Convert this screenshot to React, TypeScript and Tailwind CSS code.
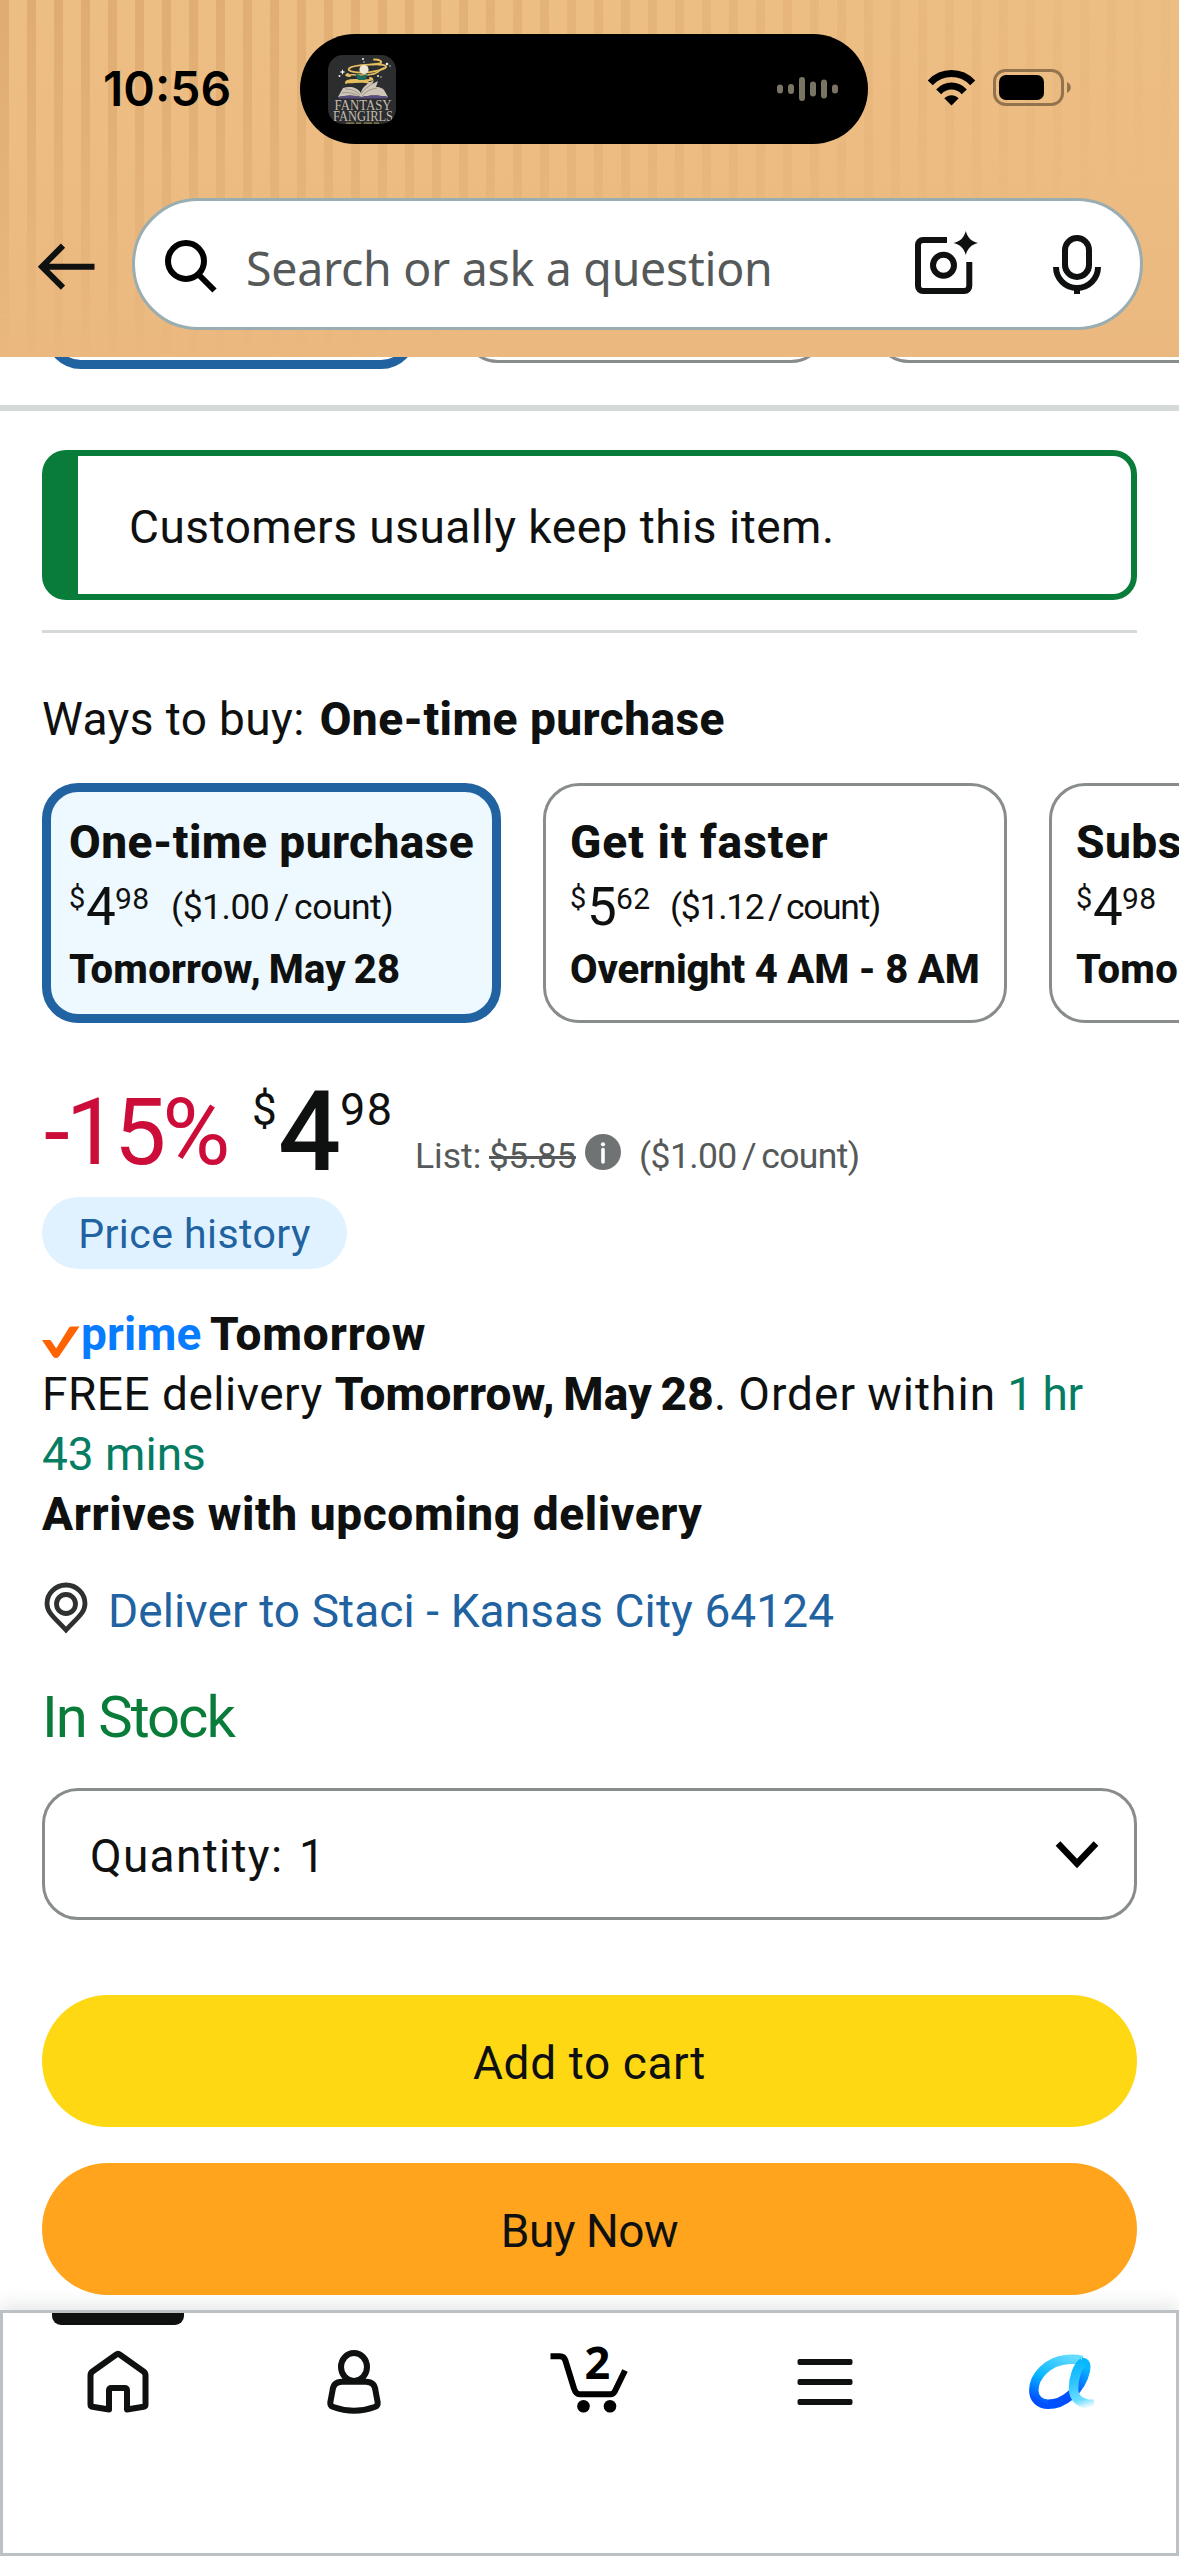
import type { ReactNode } from "react";

function AlbumArt() {
  return (
    <svg width="68" height="69" viewBox="0 0 68 69" className="mt-[21px] ml-7 shrink-0">
      <defs>
        <clipPath id="art">
          <rect width="68" height="69" rx="15" />
        </clipPath>
      </defs>
      <g clipPath="url(#art)">
        <rect width="68" height="69" fill="#2b2d2f" />
        <g fill="none" stroke="#e3bd60" strokeLinecap="round">
          <path d="M46 4.500c6 0 9 2 6 4-5 2-26 0-31 5-2 3 6 4 14 4s24-3 23-6c-1-2-6-2-8-2" strokeWidth="1.900" />
          <path d="M20 20c9-1 20 2 28-2 6-2 2-4 8-5" strokeWidth="1.600" />
          <path d="M22 21c-4 0-5-1-2-2M18 28c0-5 16-2 24-3 4 0 2-2 0-2M18 27c5 1 12-1 20 0 6 1 6 3 2 4" strokeWidth="2" />
        </g>
        <path d="M27 18l6 3 7-2-3 6-7 0z" fill="#1f6b5c" />
        <circle cx="36" cy="14.500" r="4.600" fill="#efe6d3" />
        <g fill="#f4efe4">
          <path d="M14.500 14l.8 2.200 2.200.8-2.200.8-.8 2.200-.8-2.200-2.200-.8 2.200-.8z" />
          <circle cx="11.500" cy="21" r="1" />
          <circle cx="35" cy="4" r="1" />
          <circle cx="36" cy="7" r=".7" />
          <circle cx="59" cy="9" r="1.300" />
          <circle cx="62" cy="11" r=".7" />
          <circle cx="50" cy="21" r="1" />
          <circle cx="53" cy="22" r=".7" />
        </g>
        <path d="M10 42l5-9c7-2 14-1 18 5 1-6 7-10 13-13l-2 4 6-3-2 6c5 0 7 2 8 3l4 7c-9-2-19-2-26 0-8-2-16-2-24 0z" fill="#cfc6b9" />
        <path d="M33 39c3-5 8-8 12-11M34 41c4-5 9-7 15-8M17 34c6 0 12 2 15 6M14 38c6-1 12 0 17 3" stroke="#8e857c" strokeWidth=".8" fill="none" />
        <path d="M10 42c8-2 16-2 24 0 7-2 17-2 26 0l-1 1.500H11z" fill="#5a4d80" />
        <text x="6.500" y="54.500" fontSize="14" textLength="57" lengthAdjust="spacingAndGlyphs" fill="#c3bbaf" fontFamily="Liberation Serif, serif">FANTASY</text>
        <text x="5" y="66" fontSize="14" textLength="60" lengthAdjust="spacingAndGlyphs" fill="#c3bbaf" fontFamily="Liberation Serif, serif">FANGIRLS</text>
        <path d="M18 68.200h34" stroke="#9a8a4d" strokeWidth="1.200" strokeDasharray="8 2 5 3" />
      </g>
    </svg>
  );
}

function StatusBar() {
  return (
    <div className="flex h-[144px] items-start pt-[34px]">
      <div className="w-[300px] pl-[103px] pt-[25px] font-['Inter',sans-serif] text-[48px] font-semibold leading-[60px] text-black">
        10:56
      </div>
      <div className="flex h-[110px] w-[568px] shrink-0 items-start rounded-full bg-black">
        <AlbumArt />
        <svg width="64" height="30" viewBox="0 0 64 30" className="mt-10 ml-[379px] shrink-0" stroke="#7a7462" strokeWidth="6" strokeLinecap="round">
          <path d="M5 13.500v3M16 13v4M27 6v18M38 10.500v9M49 8.500v13M60 13.500v3" />
        </svg>
      </div>
      <svg width="48" height="38" viewBox="0 0 48 38" className="mt-[35px] ml-[60px] shrink-0">
        <g fill="none" stroke="#000" strokeWidth="7">
          <path d="M2.300 13.800C14 1.400 33 1.400 44.700 13.800" />
          <path d="M10.700 22.800C18 15.200 29 15.200 36.300 22.800" />
        </g>
        <path d="M16.300 29.200c4.500-4.100 9.900-4.100 14.400 0L23.500 36.600z" />
      </svg>
      <svg width="80" height="38" viewBox="0 0 80 38" className="mt-[35px] ml-[17px] shrink-0">
        <rect x="1.500" y="1.500" width="68" height="34" rx="11" fill="none" stroke="#93734e" strokeWidth="3" />
        <rect x="6" y="6" width="45" height="25" rx="7" />
        <path d="M74 13c5 2 5 9 0 11z" fill="#93734e" />
      </svg>
    </div>
  );
}

function SearchBar() {
  return (
    <div className="flex items-start pt-[54px]">
      <svg width="60" height="50" viewBox="0 0 60 50" className="mt-11 ml-[36px] shrink-0" fill="none" stroke="#0f1111" strokeWidth="6">
        <path d="M58.500 25H6M27 4L6 25l21 21" transform="translate(0 -.3)" />
      </svg>
      <div className="ml-9 flex h-[132px] w-[1011px] shrink-0 items-start rounded-full border-[3px] border-[#9aadb0] bg-white">
        <svg width="60" height="60" viewBox="0 0 60 60" className="mt-[35px] ml-6 shrink-0" fill="none" stroke="#000" strokeWidth="6">
          <circle cx="27" cy="25" r="18" />
          <path d="M39.500 38.500L55.500 54.500" />
        </svg>
        <span className="ml-[27px] mt-[4px] w-[658px] font-['Noto_Sans',sans-serif] text-[46.500px] leading-[126px] tracking-[-0.300px] whitespace-nowrap text-[#565959]">
          Search or ask a question
        </span>
        <svg width="80" height="80" viewBox="0 0 80 80" className="mt-[24px] ml-[1px] shrink-0" fill="none" stroke="#0f1111" strokeWidth="6">
          <path d="M42 15H18a5 5 0 0 0-5 5V61a5 5 0 0 0 5 5H59.300a5 5 0 0 0 5-5V37" />
          <circle cx="38.500" cy="40.300" r="10.500" />
          <path d="M60.800 6C62.800 13 66 16 73 18 66 20 62.800 23 60.800 30 58.800 23 55.600 20 48.600 18 55.600 16 58.800 13 60.800 6z" fill="#0f1111" stroke="none" />
        </svg>
        <svg width="80" height="80" viewBox="0 0 80 80" className="mt-[24px] ml-[52px] shrink-0" fill="none" stroke="#0f1111" strokeWidth="6">
          <rect x="28" y="13" width="24" height="39" rx="12" />
          <path d="M19 42a21 21 0 0 0 42 0M40 62v7" />
        </svg>
      </div>
    </div>
  );
}

function PreviousOptions() {
  return (
    <div className="flex h-12 items-start overflow-hidden pl-[45px]">
      <div className="-mt-[88px] h-[100px] w-[372px] shrink-0 rounded-[36px] border-[9px] border-[#2162a1]" />
      <div className="-mt-[94px] ml-[45px] h-[100px] w-[365px] shrink-0 rounded-[36px] border-[3px] border-[#888c8c]" />
      <div className="-mt-[94px] ml-[46px] h-[100px] w-[400px] shrink-0 rounded-[36px] border-[3px] border-[#888c8c]" />
    </div>
  );
}

type Option = {
  title: string;
  dollars: string;
  cents: string;
  unit: string;
  when: string;
  frame: string;
  titleSpacing: string;
  unitSpacing: string;
  whenSpacing: string;
};

const options: Option[] = [
  {
    title: "One-time purchase",
    dollars: "4",
    cents: "98",
    unit: "($1.00 / count)",
    when: "Tomorrow, May 28",
    frame: "w-[459px] border-[9px] border-[#2162a1] bg-[#edf8ff] pt-5 pl-[18px]",
    titleSpacing: "tracking-[0.450px]",
    unitSpacing: "-ml-px tracking-[-0.500px]",
    whenSpacing: "tracking-[0.250px] [word-spacing:-2.500px]",
  },
  {
    title: "Get it faster",
    dollars: "5",
    cents: "62",
    unit: "($1.12 / count)",
    when: "Overnight 4 AM - 8 AM",
    frame: "ml-[42px] w-[464px] border-[3px] border-[#888c8c] bg-white pt-[26px] pl-[24px]",
    titleSpacing: "tracking-[1px]",
    unitSpacing: "-ml-[3px] tracking-[-1.300px]",
    whenSpacing: "tracking-[-0.200px]",
  },
  {
    title: "Subscribe & Save",
    dollars: "4",
    cents: "98",
    unit: "($1.00 / count)",
    when: "Tomorrow, May 28",
    frame: "ml-[42px] w-[464px] border-[3px] border-[#888c8c] bg-white pt-[26px] pl-[24px]",
    titleSpacing: "tracking-[0.450px]",
    unitSpacing: "-ml-px tracking-[-0.500px]",
    whenSpacing: "tracking-[0.250px] [word-spacing:-2.500px]",
  },
];

function OptionCard({ o }: { o: Option }) {
  return (
    <div className={`h-60 shrink-0 rounded-[36px] whitespace-nowrap ${o.frame}`}>
      <div className={`text-[46px] leading-[60px] font-[800] ${o.titleSpacing}`}>{o.title}</div>
      <div className="flex h-[68px] items-start">
        <span className="mt-[12px] w-[17px] text-[29px] leading-[29px]">$</span>
        <span className="mt-[9px] w-[29px] text-[53px] leading-[52px]">{o.dollars}</span>
        <span className="mt-[12px] w-[57px] text-[30px] leading-[29px] tracking-[0.500px]">{o.cents}</span>
        <span className={`mt-[18px] text-[35.500px] leading-[35px] [word-spacing:-3px] ${o.unitSpacing}`}>{o.unit}</span>
      </div>
      <div className={`text-[40px] leading-[60px] font-[800] ${o.whenSpacing}`}>{o.when}</div>
    </div>
  );
}

function PriceRow() {
  return (
    <div className="mt-12 flex h-[126px] items-start whitespace-nowrap">
      <span className="mt-[15px] w-[210px] pl-[2px] text-[93px] leading-[93px] tracking-[-4px] text-[#cc0c39]">-15%</span>
      <span className="mt-[17px] w-[26px] text-[44px] leading-[44px]">$</span>
      <span className="mt-[6px] w-[62px] text-[111px] leading-[111px] font-medium">4</span>
      <span className="mt-[17px] w-[75px] text-[45px] leading-[44px] tracking-[1.500px]">98</span>
      <span className="mt-[68px] w-[74px] text-[35.500px] leading-[35px] text-[#565959]">List:</span>
      <span className="mt-[68px] w-[96px] text-[35px] leading-[35px] tracking-[-0.200px] text-[#565959]"><s className="decoration-[3px]">$5.85</s></span>
      <svg width="36" height="36" viewBox="0 0 36 36" className="mt-[63px] shrink-0">
        <circle cx="18" cy="18" r="18" fill="#6f7373" />
        <circle cx="18" cy="10.300" r="2.100" fill="#fff" />
        <path d="M18 15.500V28" stroke="#fff" strokeWidth="3.600" strokeLinecap="round" />
      </svg>
      <span className="mt-[68px] ml-[18px] text-[35.500px] leading-[35px] tracking-[-0.600px] [word-spacing:-3px] text-[#565959]">($1.00 / count)</span>
    </div>
  );
}

function Delivery() {
  return (
    <div className="mt-[35px] text-[46px] leading-[60px] whitespace-nowrap">
      <div className="flex h-[60px] items-start font-[800]">
        <svg width="39" height="34" viewBox="0 0 39 34" className="mt-[21px] shrink-0">
          <path d="M0 15h7.500q1 0 1.700 1l5 7.500L27 2.800q.8-1.300 2.200-1.300h8.300L17 31.500q-3 3-6 0z" fill="#ff6200" />
        </svg>
        <span className="w-[129px] text-[46px] font-bold tracking-[0.200px] text-[#077cff]">prime</span>
        <span className="tracking-[0.900px]">Tomorrow</span>
      </div>
      <div className="tracking-[0.500px]">
        FREE delivery <b className="font-[800] tracking-[0.200px] [word-spacing:-3px]">Tomorrow, May 28</b>
        <span className="tracking-[1.050px] [word-spacing:-1.500px]">. Order within <span className="tracking-[-0.200px] text-[#067d62]">1 hr</span></span>
      </div>
      <div className="text-[#067d62]">43 mins</div>
      <div className="font-[800] tracking-[0.600px]">Arrives with upcoming delivery</div>
    </div>
  );
}

function NavItem({ children }: { children: ReactNode }) {
  return <div className="relative flex justify-center pt-[29px]">{children}</div>;
}

function BottomNav() {
  return (
    <nav className="relative mt-[15px] h-[246px] border-[3px] border-[#bbc1c4] bg-white shadow-[0_-4px_18px_rgba(15,30,30,0.12)]">
      <div className="-mx-[3px] grid grid-cols-5">
        <NavItem>
          <div className="absolute top-0 left-[52px] h-3 w-[132px] rounded-b-[9px] bg-[#0f1111]" />
          <svg width="80" height="80" viewBox="0 0 80 80" fill="none" stroke="#0f1111" strokeWidth="6" strokeLinejoin="round">
            <path d="M38 12.700q2-1.700 4 0L65.500 29.500q2 1.500 2 4V62.500q0 2-2 2.300L49 67.500V48.500q0-2.500-2.500-2.500H33.500q-2.500 0-2.500 2.500V67.500L14.500 64.800q-2-.3-2-2.300V33.500q0-2.500 2-4z" />
          </svg>
        </NavItem>
        <NavItem>
          <svg width="80" height="80" viewBox="0 0 80 80" fill="none" stroke="#0f1111" strokeWidth="6">
            <ellipse cx="40" cy="25" rx="13" ry="14" />
            <path d="M28 39.700c-6 0-9 3.500-9.500 9L16.300 60.500c-.2 2.500.7 3.700 3 4.500 13 4.700 28.400 4.700 41.400 0 2.300-.8 3.200-2 3-4.500L61.500 48.700c-.5-5.500-3.500-9-9.500-9z" />
          </svg>
        </NavItem>
        <NavItem>
          <div className="relative">
            <svg width="80" height="80" viewBox="0 0 80 80" fill="none" stroke="#000" strokeWidth="6">
              <path d="M1.500 14.300H11q4 0 5.300 4L25 46.500q2 5.800 5.500 5.800H61.500q3 0 4.500-3.300L76 28.500" strokeLinejoin="round" />
              <circle cx="34.500" cy="64.300" r="6.300" fill="#000" stroke="none" />
              <circle cx="61" cy="64.300" r="6.300" fill="#000" stroke="none" />
            </svg>
            <span className="absolute top-[-10px] left-[35px] font-['Noto_Sans',sans-serif] text-[45px] leading-[60px] font-bold text-black">2</span>
          </div>
        </NavItem>
        <NavItem>
          <svg width="80" height="80" viewBox="0 0 80 80" fill="#0f1111">
            <rect x="12.500" y="17" width="55" height="6" rx="2" />
            <rect x="12.500" y="37" width="55" height="6" rx="2" />
            <rect x="12.500" y="57" width="55" height="6" rx="2" />
          </svg>
        </NavItem>
        <NavItem>
          <svg width="80" height="80" viewBox="0 0 80 80" fill="none" strokeWidth="9.500">
            <defs>
              <linearGradient id="ring" gradientUnits="userSpaceOnUse" x1="50" y1="14" x2="26" y2="64">
                <stop offset="0" stopColor="#66dcff" />
                <stop offset=".22" stopColor="#40ccff" />
                <stop offset=".55" stopColor="#08b8ff" />
                <stop offset=".82" stopColor="#0078ff" />
                <stop offset="1" stopColor="#004fff" />
              </linearGradient>
              <linearGradient id="stem" gradientUnits="userSpaceOnUse" x1="66" y1="26" x2="30" y2="64">
                <stop offset="0" stopColor="#08b8ff" />
                <stop offset=".3" stopColor="#0878ff" />
                <stop offset=".6" stopColor="#004fff" />
                <stop offset="1" stopColor="#004fff" />
              </linearGradient>
              <linearGradient id="tail" gradientUnits="userSpaceOnUse" x1="60" y1="18" x2="74" y2="64">
                <stop offset="0" stopColor="#06b6ff" />
                <stop offset=".4" stopColor="#2cc4ff" />
                <stop offset=".8" stopColor="#70deff" />
                <stop offset="1" stopColor="#70deff" stopOpacity="0" />
              </linearGradient>
            </defs>
            <path d="M61 18.500C56 17 51 17 46 17.500 27 19 12.800 34 12.800 48.500 12.800 57 19 62.300 27 62.300" stroke="url(#ring)" />
            <path d="M27 62.300C42 62.300 60 49 64.500 28 65.500 23 64.500 20.500 61 20.500" stroke="url(#stem)" />
            <path d="M62 20.500C56.500 24 52.500 36 52.500 46.500 52.500 56 59 62.800 73 62.300" stroke="url(#tail)" />
          </svg>
        </NavItem>
      </div>
    </nav>
  );
}

export default function App() {
  return (
    <div className="flex h-[2556px] w-[1179px] flex-col overflow-hidden bg-white font-['Roboto',sans-serif] text-[#0f1111]">
      <header className="relative h-[357px] shrink-0 bg-linear-to-b from-[#edbe84] to-[#ebb980]">
        <div className="absolute inset-0 bg-[repeating-linear-gradient(90deg,rgba(190,130,70,0.3)_0px,rgba(190,130,70,0.3)_9px,transparent_9px,transparent_27px)] mask-[radial-gradient(ellipse_1300px_370px_at_0_0,black,transparent)]" />
        <div className="relative">
          <StatusBar />
          <SearchBar />
        </div>
      </header>
      <PreviousOptions />
      <div className="h-[6px] shrink-0 bg-[#d5d9d9]" />

      <main className="px-[42px]">
        <div className="mt-[39px] h-[150px] overflow-hidden rounded-[24px] border-[6px] border-l-[36px] border-[#0a7c3a] pl-[51px] text-[46px] leading-[142px] tracking-[0.500px]">
          Customers usually keep this item.
        </div>
        <div className="mt-[30px] h-[3px] bg-[#d5d9d9]" />

        <div className="mt-14 text-[46px] leading-[60px] tracking-[0.400px] whitespace-nowrap">
          Ways to buy: <b className="ml-[3px] font-[800] tracking-[0.450px]">One-time purchase</b>
        </div>
        <div className="-mr-[42px] mt-[34px] flex overflow-hidden">
          {options.map((o, i) => (
            <OptionCard key={i} o={o} />
          ))}
        </div>

        <PriceRow />
        <div className="h-[72px] w-[305px] rounded-full bg-[#e0f2ff] pt-[1px] text-center text-[41px] leading-[72px] tracking-[0.450px] text-[#2162a1]">
          Price history
        </div>
        <Delivery />

        <div className="mt-[37px] flex items-start text-[46px] leading-[60px] whitespace-nowrap text-[#2162a1]">
          <svg width="48" height="52" viewBox="0 0 48 52" className="mt-[1px] shrink-0" fill="none" stroke="#2f3030" strokeWidth="4.800">
            <path d="M24 48C13 36 5 31 5 21.500a19 18.500 0 0 1 38 0C43 31 35 36 24 48z" />
            <circle cx="24" cy="22" r="9.500" />
          </svg>
          <span className="ml-[18px] tracking-[0.100px]">Deliver to Staci - Kansas City 64124</span>
        </div>
        <div className="mt-[46px] text-[58px] leading-[60px] tracking-[-2px] text-[#0a7c3a]">In Stock</div>

        <div className="mt-[41px] flex h-[132px] items-center rounded-[36px] border-[3px] border-[#888c8c] pl-[45px] text-[46px] leading-[60px]">
          <span className="w-[209px] pt-1 tracking-[1.300px]">Quantity:</span>
          <span className="flex-1 pt-1">1</span>
          <svg width="48" height="32" viewBox="0 0 48 32" className="mr-[33px]" fill="none" stroke="#000" strokeWidth="6.500">
            <path d="M5 5.500L24 25.500 43 5.500" />
          </svg>
        </div>
        <button className="mt-[75px] block h-[132px] w-full rounded-full bg-[#ffd814] pt-1 text-[46px] tracking-[0.600px]">Add to cart</button>
        <button className="mt-9 block h-[132px] w-full rounded-full bg-[#ffa41c] pt-1 text-[46px] tracking-[-0.500px]">Buy Now</button>
      </main>

      <BottomNav />
    </div>
  );
}
